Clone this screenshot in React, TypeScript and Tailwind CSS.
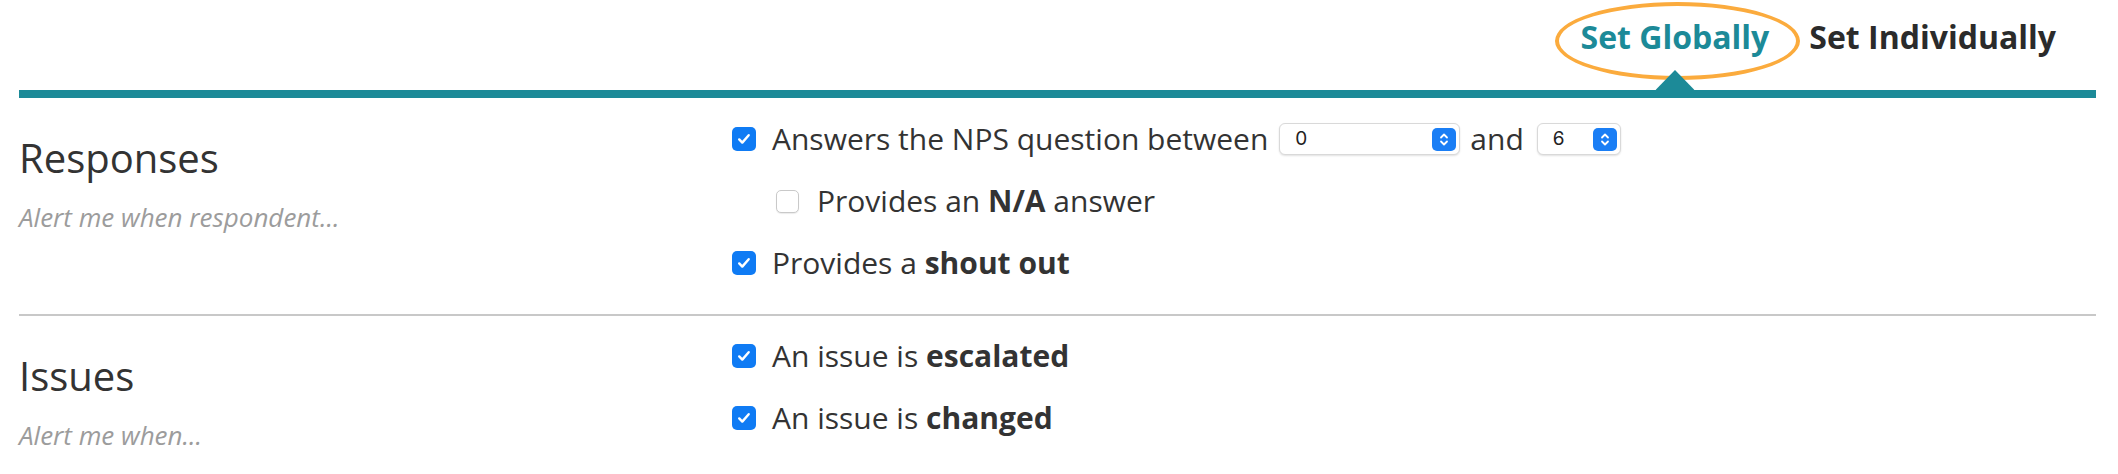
import React from "react";

function Checkbox({ checked }: { checked: boolean }) {
  if (!checked) {
    return (
      <span className="block w-[23px] h-[23px] shrink-0 rounded-[5px] border border-[#c9c9c9] bg-white shadow-[0_1px_1px_rgba(0,0,0,0.08)]" />
    );
  }
  return (
    <span className="flex w-[24px] h-[24px] shrink-0 items-center justify-center rounded-[5px] bg-[#0f7bf4]">
      <svg width="16" height="16" viewBox="0 0 16 16" fill="none">
        <path d="M3.2 8.4l3.1 3.2 6.4-7.4" stroke="white" strokeWidth="2.4" strokeLinecap="round" strokeLinejoin="round" />
      </svg>
    </span>
  );
}

function Select({ value, width }: { value: string; width: string }) {
  return (
    <span
      className={`flex items-center justify-between h-[32px] ${width} rounded-[6px] border border-[#d9d9d9] bg-white pl-[15px] pr-[3px] shadow-[0_1px_2px_rgba(0,0,0,0.12)]`}
    >
      <span className="font-['Inter',sans-serif] text-[19px] text-[#222]">{value}</span>
      <span className="flex w-[24px] h-[23px] items-center justify-center rounded-[5px] bg-[#1a7ef5]">
        <svg width="12" height="17" viewBox="0 0 12 17" fill="none">
          <path d="M3 6.5l3-3 3 3M3 10.5l3 3 3-3" stroke="white" strokeWidth="1.8" strokeLinecap="round" strokeLinejoin="round" />
        </svg>
      </span>
    </span>
  );
}

function Row({ checked, indent, children }: { checked: boolean; indent?: boolean; children: React.ReactNode }) {
  return (
    <div className={`flex items-center h-[62px] ${indent ? "pl-[44px]" : ""}`}>
      <Checkbox checked={checked} />
      <div className={`flex items-center text-[30px] leading-[40px] text-[#333] ${indent ? "ml-[18px]" : "ml-[16px]"}`}>
        {children}
      </div>
    </div>
  );
}

function SectionLabel({ title, hint }: { title: string; hint: string }) {
  return (
    <div className="w-[713px] shrink-0 pt-[36px]">
      <h2 className="text-[40px] leading-[48px] text-[#333] font-normal">{title}</h2>
      <p className="mt-[19px] text-[26px] leading-[32px] italic text-[#9c9c9c]">{hint}</p>
    </div>
  );
}

export default function App() {
  return (
    <div className="w-[2118px] h-[474px] overflow-hidden bg-white pl-[19px] pr-[22px] font-['Open_Sans',sans-serif]">
      <div className="flex h-[90px] justify-end gap-[40px] pt-[17px] pr-[40px]">
        <span className="relative text-[32px] leading-[40px] font-bold text-[#1c8a98] whitespace-nowrap">
          Set Globally
          <span className="absolute left-[-26px] top-[-15px] w-[245px] h-[78px] rounded-[50%] border-[4px] border-[#fbab3d]" />
          <svg className="absolute left-1/2 top-[53px] -translate-x-1/2" width="39" height="20" viewBox="0 0 39 20">
            <path d="M0 20L19.5 0L39 20Z" fill="#1c8a98" />
          </svg>
        </span>
        <span className="text-[32px] leading-[40px] font-bold text-[#2b2b2b] whitespace-nowrap">Set Individually</span>
      </div>
      <div className="h-[8px] bg-[#1c8a98]" />

      <section className="flex h-[216px]">
        <SectionLabel title="Responses" hint="Alert me when respondent..." />
        <div className="pt-[10px]">
          <Row checked>
            <span>Answers the NPS question between</span>
            <span className="ml-[11px]">
              <Select value="0" width="w-[181px]" />
            </span>
            <span className="ml-[10px]">and</span>
            <span className="ml-[13px]">
              <Select value="6" width="w-[84px]" />
            </span>
          </Row>
          <Row checked={false} indent>
            <span>
              Provides an <b className="font-bold">N/A</b> answer
            </span>
          </Row>
          <Row checked>
            <span>
              Provides a <b className="font-bold">shout out</b>
            </span>
          </Row>
        </div>
      </section>
      <div className="h-[2px] bg-[#c8c8c8]" />

      <section className="flex">
        <SectionLabel title="Issues" hint="Alert me when..." />
        <div className="pt-[9px]">
          <Row checked>
            <span>
              An issue is <b className="font-bold">escalated</b>
            </span>
          </Row>
          <Row checked>
            <span>
              An issue is <b className="font-bold">changed</b>
            </span>
          </Row>
        </div>
      </section>
    </div>
  );
}
